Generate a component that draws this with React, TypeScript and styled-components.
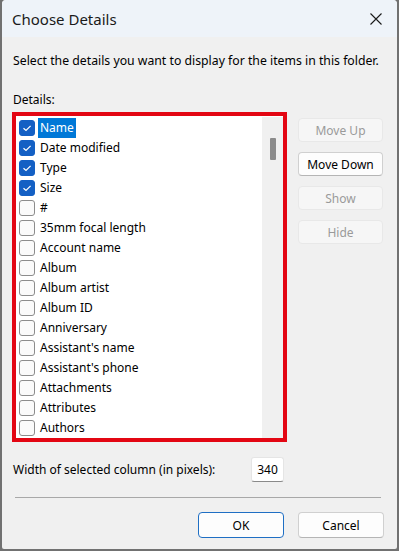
import styled, { createGlobalStyle } from "styled-components";

const GlobalStyle = createGlobalStyle`
  html, body {
    margin: 0;
    padding: 0;
    background: #717171;
  }
  body {
    font-family: "Noto Sans", "Open Sans", sans-serif;
    font-size: 12px;
    color: #000;
  }
`;

const Window = styled.div`
  margin: 0 2px 2px 2px;
  height: 549px;
  background: #f0f0f0;
  border-radius: 4px 4px 2px 2px;
  display: flex;
  flex-direction: column;
  overflow: hidden;
`;

const TitleBar = styled.div`
  height: 37px;
  flex: none;
  background: #eef3f9;
  display: flex;
  align-items: center;
  justify-content: space-between;
  padding: 0 15px 0 10px;
`;

const Title = styled.div`
  font-size: 15px;
  color: #1a1a1a;
  padding-top: 1px;
`;

const CloseButton = styled.div`
  width: 12px;
  height: 12px;
  display: flex;
  svg {
    display: block;
  }
`;

const Body = styled.div`
  flex: 1;
  display: flex;
  flex-direction: column;
  padding: 16px 13px 12px 10px;
`;

const Label = styled.div<{ $gap?: number }>`
  line-height: 16px;
  padding-left: 1px;
  margin-bottom: ${(p) => p.$gap ?? 0}px;
`;

const Intro = styled(Label)`
  font-size: 12.25px;
`;

const MainRow = styled.div`
  display: flex;
  gap: 11px;
`;

const ListFrame = styled.div`
  width: 267px;
  height: 321px;
  border: 4px solid #e30613;
  background: #fff;
  display: flex;
  padding-top: 1px;
  box-sizing: content-box;
`;

const ItemList = styled.div`
  flex: 1;
  overflow: hidden;
  display: flex;
  flex-direction: column;
  padding-top: 1px;
`;

const ScrollTrack = styled.div`
  width: 21px;
  flex: none;
  background: #f0f0f0;
  display: flex;
  justify-content: center;
  padding-top: 21px;
`;

const ScrollThumb = styled.div`
  width: 6px;
  height: 22px;
  background: #8b8b8b;
  border-radius: 1px;
`;

const Row = styled.div`
  height: 20px;
  flex: none;
  display: flex;
  align-items: center;
  padding-left: 3px;
`;

const Box = styled.div<{ $checked: boolean }>`
  width: 16px;
  height: 16px;
  box-sizing: border-box;
  border-radius: 3px;
  border: 1px solid ${(p) => (p.$checked ? "#1460c4" : "#8c8c8c")};
  background: ${(p) => (p.$checked ? "#1460c4" : "#fafafa")};
  display: flex;
  align-items: center;
  justify-content: center;
  margin-right: 3px;
`;

const ItemText = styled.span<{ $selected: boolean }>`
  height: 20px;
  line-height: 20px;
  padding: 0 2px;
  white-space: nowrap;
  background: ${(p) => (p.$selected ? "#0078d7" : "transparent")};
  color: ${(p) => (p.$selected ? "#fff" : "#000")};
`;

const ButtonColumn = styled.div`
  display: flex;
  flex-direction: column;
  gap: 10px;
  padding-top: 6px;
`;

const Button = styled.div<{ $disabled?: boolean; $primary?: boolean; $w?: number; $h?: number }>`
  width: ${(p) => p.$w ?? 85}px;
  height: ${(p) => p.$h ?? 24}px;
  box-sizing: border-box;
  border-radius: 4px;
  display: flex;
  align-items: center;
  justify-content: center;
  background: ${(p) => (p.$disabled ? "#f6f6f6" : "#fdfdfd")};
  border: 1px solid
    ${(p) => (p.$primary ? "#1f6fc4" : p.$disabled ? "#e8e8e8" : "#d0d0d0")};
  border-bottom-color: ${(p) =>
    p.$primary ? "#1f6fc4" : p.$disabled ? "#e8e8e8" : "#b5b5b5"};
  color: ${(p) => (p.$disabled ? "#9a9a9a" : "#000")};
`;

const WidthRow = styled.div`
  display: flex;
  align-items: center;
  justify-content: space-between;
  margin-top: 15px;
  padding-right: 100px;
`;

const NumberBox = styled.div`
  width: 33px;
  height: 25px;
  box-sizing: border-box;
  background: #fff;
  border: 1px solid #e5e5e5;
  border-bottom-color: #8a8a8a;
  border-radius: 3px;
  display: flex;
  align-items: center;
  justify-content: center;
`;

const Separator = styled.div`
  height: 1px;
  background: #a8a8a8;
  margin: 15px 3px 14px 3px;
`;

const Footer = styled.div`
  display: flex;
  justify-content: flex-end;
  gap: 14px;
`;

const items = [
  "Name",
  "Date modified",
  "Type",
  "Size",
  "#",
  "35mm focal length",
  "Account name",
  "Album",
  "Album artist",
  "Album ID",
  "Anniversary",
  "Assistant's name",
  "Assistant's phone",
  "Attachments",
  "Attributes",
  "Authors",
];

const checkedCount = 4;

function App() {
  return (
    <>
      <GlobalStyle />
      <Window>
        <TitleBar>
          <Title>Choose Details</Title>
          <CloseButton>
            <svg width="12" height="12" viewBox="0 0 12 12">
              <path d="M0.5 0.5 L11.5 11.5 M11.5 0.5 L0.5 11.5" stroke="#1a1a1a" strokeWidth="1.1" />
            </svg>
          </CloseButton>
        </TitleBar>
        <Body>
          <Intro $gap={23}>Select the details you want to display for the items in this folder.</Intro>
          <Label $gap={4}>Details:</Label>
          <MainRow>
            <ListFrame>
              <ItemList>
                {items.map((name, i) => (
                  <Row key={name}>
                    <Box $checked={i < checkedCount}>
                      {i < checkedCount && (
                        <svg width="10" height="10" viewBox="0 0 10 10">
                          <path d="M1.5 5.2 L4 7.5 L8.6 2.8" fill="none" stroke="#fff" strokeWidth="1.2" />
                        </svg>
                      )}
                    </Box>
                    <ItemText $selected={i === 0}>{name}</ItemText>
                  </Row>
                ))}
              </ItemList>
              <ScrollTrack>
                <ScrollThumb />
              </ScrollTrack>
            </ListFrame>
            <ButtonColumn>
              <Button $disabled>Move Up</Button>
              <Button>Move Down</Button>
              <Button $disabled>Show</Button>
              <Button $disabled>Hide</Button>
            </ButtonColumn>
          </MainRow>
          <WidthRow>
            <Label>Width of selected column (in pixels):</Label>
            <NumberBox>340</NumberBox>
          </WidthRow>
          <Separator />
          <Footer>
            <Button $primary $w={86} $h={26}>OK</Button>
            <Button $w={86} $h={26}>Cancel</Button>
          </Footer>
        </Body>
      </Window>
    </>
  );
}

export default App;
